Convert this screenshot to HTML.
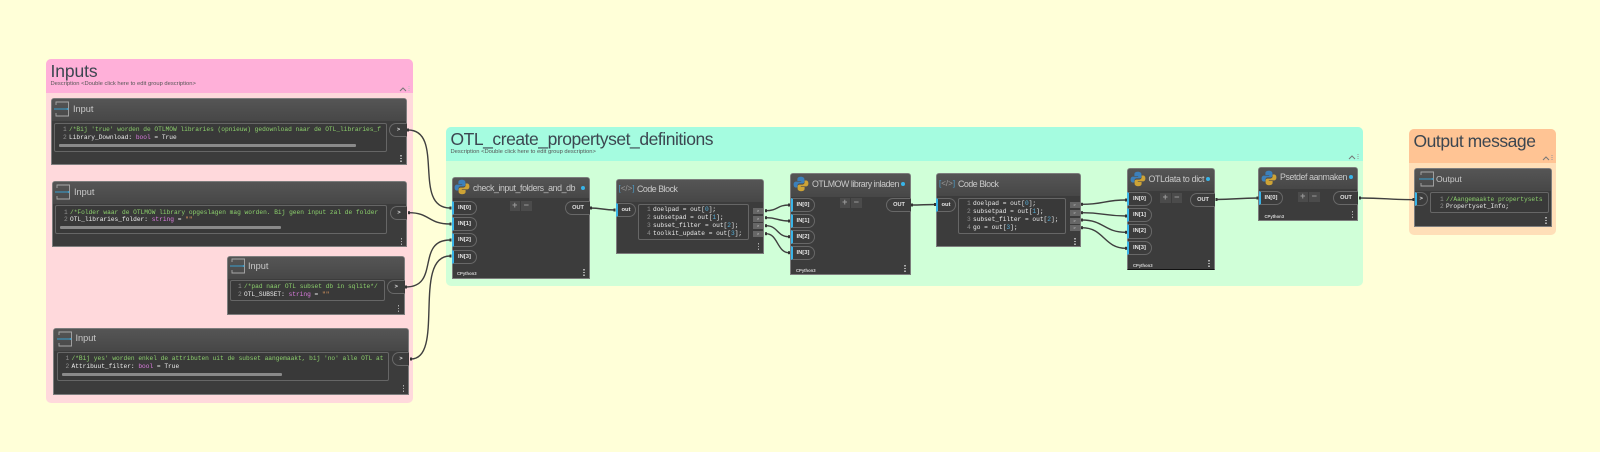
<!DOCTYPE html>
<html><head><meta charset="utf-8"><style>
html,body{margin:0;padding:0}
body{width:1600px;height:452px;background:#ffffd8;position:relative;overflow:hidden;font-family:"Liberation Sans",sans-serif}
#w{position:absolute;left:0;top:0;width:1600px;height:452px;filter:blur(.35px)}
#w div,#w svg{position:absolute}
.gh{border-radius:5px 5px 0 0}
.gt{color:#3c4650;font-size:17.5px;line-height:20px;white-space:nowrap;letter-spacing:-.46px}
.gd{color:#555;font-size:5.8px;line-height:7px;white-space:nowrap}
.n{background:#3c3c3c;border:1px solid #7d7d7d;box-sizing:border-box;border-radius:3px 3px 0 0}
.h{left:0;right:0;top:0;background:linear-gradient(#555,#474747);border-radius:2px 2px 0 0}
.t{color:#c9c9c9;font-size:8.8px;line-height:10px;white-space:nowrap;letter-spacing:-.4px}
.ti{letter-spacing:0;font-size:9.2px}
.c{border:1px solid #666;box-sizing:border-box;border-radius:2px;background:#393939}
.l{font-family:"Liberation Mono",monospace;font-size:6.2px;line-height:8px;color:#ececec;white-space:pre}
.g{font-family:"Liberation Mono",monospace;font-size:6.2px;line-height:8px;color:#8f8f8f}
.v{color:#8cd06c}.k{color:#dc7ce0}.s{color:#e09a60}.b{color:#55aed8}
.sb{height:3px;background:#8a8a8a;border-radius:1px}
.p{box-sizing:border-box;height:14.4px;width:24.5px;border:1px solid #686868;border-left:2px solid #38b4e8;border-radius:0 7px 7px 0;background:#3c3c3c;color:#e4e4e4;font-size:5.8px;font-weight:bold;line-height:12.4px;padding-left:4px;white-space:nowrap}
.o{box-sizing:border-box;height:14.4px;width:25px;border:1px solid #686868;border-right:0;border-radius:7px 0 0 7px;color:#e4e4e4;font-size:5.6px;font-weight:bold;line-height:12.4px;text-align:center;background:#3c3c3c}
.q{width:10px;height:6px;background:#666;color:#ddd;font-size:4px;line-height:6px;text-align:center}
.pm{width:10.5px;height:10px;background:#4b4b4b;color:#999;font-size:9px;line-height:9px;text-align:center;font-weight:bold}
.cp{color:#d6d6d6;font-size:4.2px;font-weight:bold;line-height:5px;white-space:nowrap}
.dt{width:4px;height:4px;border-radius:50%;background:#38b4e8}
.d3{width:1.5px;height:7px;background:repeating-linear-gradient(#aaa 0 1.4px,transparent 1.4px 2.8px)}
</style></head><body><div id="w">
<svg width="0" height="0"><defs>
<symbol id="py" viewBox="0 0 16 16"><path fill="#3c80bb" d="M8 .8C5 .8 4.4 2 4.4 3.2V5h3.8v.6H3C1.5 5.6.6 6.8.6 8.5s.8 3 2.2 3h1.6V9.6c0-1.2 1-2.2 2.2-2.2h3c1 0 1.8-.8 1.8-1.8V3.2C11.4 2 10.2.8 8 .8z"/><path fill="#cda336" d="M8 15.2c3 0 3.6-1.2 3.6-2.4V11H7.8v-.6H13c1.500 0 2.400-1.200 2.400-2.900s-.8-3-2.200-3h-1.600v1.900c0 1.200-1 2.200-2.200 2.200h-3c-1 0-1.800.8-1.800 1.800v2.400c0 1.200 1.200 2.400 3.400 2.400z"/></symbol>
<symbol id="io" viewBox="0 0 16 16"><path fill="none" stroke="#a8a8a8" stroke-width=".9" d="M2 4V1h12.500v14H2v-3"/><path fill="none" stroke="#38a8dc" stroke-width=".9" d="M0 8h13.500"/><circle cx="13.500" cy="8" r=".9" fill="#38a8dc"/></symbol>
</defs></svg>

<!-- groups -->
<div style="left:46px;top:59px;width:367px;height:344px;background:#ffd9dc;border-radius:5px"></div>
<div class="gh" style="left:46px;top:59px;width:367px;height:34px;background:#ffb0d9"></div>
<div class="gt" style="left:50.500px;top:61.300px;letter-spacing:-.1px">Inputs</div>
<div class="gd" style="left:50.500px;top:81px">Description &lt;Double click here to edit group description&gt;</div>
<svg style="left:399px;top:85.500px" width="12" height="6"><path d="M1 5l3-3 3 3" fill="none" stroke="#777" stroke-width="1"/><path d="M10 0v6" stroke="#bbb" stroke-dasharray="1 1"/></svg>

<div style="left:446px;top:127px;width:917px;height:159px;background:#d0ffd8;border-radius:5px"></div>
<div class="gh" style="left:446px;top:127px;width:917px;height:34px;background:#a5fce0"></div>
<div class="gt" style="left:450.500px;top:129px">OTL_create_propertyset_definitions</div>
<div class="gd" style="left:450.500px;top:149px">Description &lt;Double click here to edit group description&gt;</div>
<svg style="left:1348px;top:153.500px" width="12" height="6"><path d="M1 5l3-3 3 3" fill="none" stroke="#777" stroke-width="1"/><path d="M10 0v6" stroke="#999" stroke-dasharray="1 1"/></svg>

<div style="left:1409px;top:129px;width:147px;height:106px;background:#ffdfb8;border-radius:5px"></div>
<div class="gh" style="left:1409px;top:129px;width:147px;height:34px;background:#ffc494"></div>
<div class="gt" style="left:1413.500px;top:130.700px">Output message</div>
<svg style="left:1542px;top:155px" width="12" height="6"><path d="M1 5l3-3 3 3" fill="none" stroke="#777" stroke-width="1"/><path d="M10 0v6" stroke="#999" stroke-dasharray="1 1"/></svg>

<!-- input 1 -->
<div class="n" style="left:51px;top:98px;width:356px;height:67px"><div class="h" style="height:22px"></div></div>
<svg style="left:54px;top:101px" width="16" height="16"><use href="#io"/></svg>
<div class="t ti" style="left:73px;top:104px">Input</div>
<div class="c" style="left:54px;top:122.500px;width:333px;height:29.500px"></div>
<div class="g" style="left:63px;top:125.500px">1</div><div class="g" style="left:63px;top:133.500px">2</div>
<div class="l" style="left:69px;top:125.500px"><span class="v">/*Bij 'true' worden de OTLMOW libraries (opnieuw) gedownload naar de OTL_libraries_f</span></div>
<div class="l" style="left:69px;top:133.500px">Library_Download: <span class="k">bool</span> = True</div>
<div class="sb" style="left:59px;top:143.500px;width:297px"></div>
<div class="o" style="left:389px;top:123px;width:18px">&gt;</div>
<div class="d3" style="left:400px;top:155px"></div>

<!-- input 2 -->
<div class="n" style="left:52px;top:181px;width:355px;height:66px"><div class="h" style="height:22px"></div></div>
<svg style="left:55px;top:184px" width="16" height="16"><use href="#io"/></svg>
<div class="t ti" style="left:74px;top:186.500px">Input</div>
<div class="c" style="left:55px;top:205px;width:332px;height:29px"></div>
<div class="g" style="left:64px;top:208.500px">1</div><div class="g" style="left:64px;top:216px">2</div>
<div class="l" style="left:70px;top:208.500px"><span class="v">/*Folder waar de OTLMOW library opgeslagen mag worden. Bij geen input zal de folder</span></div>
<div class="l" style="left:70px;top:216px">OTL_libraries_folder: <span class="k">string</span> = <span class="s">""</span></div>
<div class="sb" style="left:60px;top:226px;width:221px"></div>
<div class="o" style="left:390px;top:205.500px;width:17px">&gt;</div>
<div class="d3" style="left:400.500px;top:237.500px"></div>

<!-- input 3 -->
<div class="n" style="left:226.500px;top:255.500px;width:178px;height:59px"><div class="h" style="height:22px"></div></div>
<svg style="left:230px;top:258px" width="16" height="16"><use href="#io"/></svg>
<div class="t ti" style="left:248px;top:261px">Input</div>
<div class="c" style="left:229.500px;top:280px;width:155.500px;height:21px"></div>
<div class="g" style="left:238px;top:283px">1</div><div class="g" style="left:238px;top:290.500px">2</div>
<div class="l" style="left:244px;top:283px"><span class="v">/*pad naar OTL subset db in sqlite*/</span></div>
<div class="l" style="left:244px;top:290.500px">OTL_SUBSET: <span class="k">string</span> = <span class="s">""</span></div>
<div class="o" style="left:387px;top:279.500px;width:17.500px">&gt;</div>
<div class="d3" style="left:397.500px;top:304.500px"></div>

<!-- input 4 -->
<div class="n" style="left:53px;top:327.500px;width:356px;height:67.500px"><div class="h" style="height:22px"></div></div>
<svg style="left:56.500px;top:330.500px" width="16" height="16"><use href="#io"/></svg>
<div class="t ti" style="left:75.500px;top:333px">Input</div>
<div class="c" style="left:56.500px;top:352px;width:332.500px;height:28.500px"></div>
<div class="g" style="left:65.500px;top:355px">1</div><div class="g" style="left:65.500px;top:362.500px">2</div>
<div class="l" style="left:71.500px;top:355px"><span class="v">/*Bij yes' worden enkel de attributen uit de subset aangemaakt, bij 'no' alle OTL at</span></div>
<div class="l" style="left:71.500px;top:362.500px">Attribuut_filter: <span class="k">bool</span> = True</div>
<div class="sb" style="left:61.500px;top:373px;width:220px"></div>
<div class="o" style="left:392px;top:352px;width:17px">&gt;</div>
<div class="d3" style="left:402.500px;top:384.500px"></div>

<!-- python A -->
<div class="n" style="left:451.500px;top:176.500px;width:138.500px;height:102px"><div class="h" style="height:20.500px"></div></div>
<svg style="left:454px;top:179px" width="16" height="16"><use href="#py"/></svg>
<div class="t" style="left:473px;top:182.500px">check_input_folders_and_db</div>
<div class="dt" style="left:580.500px;top:185.500px"></div>
<div class="p" style="left:452px;top:201px">IN[0]</div><div class="p" style="left:452px;top:217px">IN[1]</div><div class="p" style="left:452px;top:233px">IN[2]</div><div class="p" style="left:452px;top:249.500px">IN[3]</div>
<div class="pm" style="left:509.500px;top:201px">+</div><div class="pm" style="left:521px;top:201px">−</div>
<div class="o" style="left:565px;top:201px">OUT</div>
<div class="cp" style="left:457px;top:271px">CPython3</div>
<div class="d3" style="left:583px;top:268.500px"></div>

<!-- code 1 -->
<div class="n" style="left:615.500px;top:178.500px;width:148.500px;height:75px"><div class="h" style="height:22.500px"></div></div>
<div class="t" style="left:618.500px;top:184px;font-size:8px;letter-spacing:0;color:#4a9cc8">[<span style="color:#999">&lt;/&gt;</span>]</div>
<div class="t" style="left:637px;top:184px;letter-spacing:-.45px">Code Block</div>
<div class="p" style="left:616px;top:203px;width:19.500px;padding-left:3.500px">out</div>
<div class="c" style="left:638px;top:203.500px;width:111px;height:36px"></div>
<div class="g" style="left:647px;top:206.300px">1</div><div class="g" style="left:647px;top:214px">2</div><div class="g" style="left:647px;top:221.700px">3</div><div class="g" style="left:647px;top:229.500px">4</div>
<div class="l" style="left:653px;top:206.300px">doelpad = out[<span class="b">0</span>];</div>
<div class="l" style="left:653px;top:214px">subsetpad = out[<span class="b">1</span>];</div>
<div class="l" style="left:653px;top:221.700px">subset_filter = out[<span class="b">2</span>];</div>
<div class="l" style="left:653px;top:229.500px">toolkit_update = out[<span class="b">3</span>];</div>
<div class="q" style="left:753px;top:207.700px">&gt;</div><div class="q" style="left:753px;top:215.500px">&gt;</div><div class="q" style="left:753px;top:223.200px">&gt;</div><div class="q" style="left:753px;top:230.900px">&gt;</div>
<div class="d3" style="left:757.500px;top:243px"></div>

<!-- python B -->
<div class="n" style="left:790px;top:173px;width:120.500px;height:102px"><div class="h" style="height:23px"></div></div>
<svg style="left:793px;top:176px" width="16" height="16"><use href="#py"/></svg>
<div class="t" style="left:812px;top:179px;letter-spacing:-.45px">OTLMOW library inladen</div>
<div class="dt" style="left:901px;top:182px"></div>
<div class="p" style="left:790.500px;top:197.500px">IN[0]</div><div class="p" style="left:790.500px;top:213.700px">IN[1]</div><div class="p" style="left:790.500px;top:229.700px">IN[2]</div><div class="p" style="left:790.500px;top:246px">IN[3]</div>
<div class="pm" style="left:839.500px;top:198px">+</div><div class="pm" style="left:851px;top:198px">−</div>
<div class="o" style="left:886px;top:197.500px">OUT</div>
<div class="cp" style="left:796px;top:267.500px">CPython3</div>
<div class="d3" style="left:904px;top:265px"></div>

<!-- code 2 -->
<div class="n" style="left:936px;top:172.500px;width:144.500px;height:74.500px"><div class="h" style="height:22.500px"></div></div>
<div class="t" style="left:939px;top:179px;font-size:8px;letter-spacing:0;color:#4a9cc8">[<span style="color:#999">&lt;/&gt;</span>]</div>
<div class="t" style="left:958px;top:179px;letter-spacing:-.45px">Code Block</div>
<div class="p" style="left:936px;top:197.500px;width:19.500px;padding-left:3.500px">out</div>
<div class="c" style="left:958px;top:197.500px;width:108px;height:36.500px"></div>
<div class="g" style="left:967px;top:200.300px">1</div><div class="g" style="left:967px;top:208.300px">2</div><div class="g" style="left:967px;top:216px">3</div><div class="g" style="left:967px;top:223.500px">4</div>
<div class="l" style="left:973px;top:200.300px">doelpad = out[<span class="b">0</span>];</div>
<div class="l" style="left:973px;top:208.300px">subsetpad = out[<span class="b">1</span>];</div>
<div class="l" style="left:973px;top:216px">subset_filter = out[<span class="b">2</span>];</div>
<div class="l" style="left:973px;top:223.500px">go = out[<span class="b">3</span>];</div>
<div class="q" style="left:1069.500px;top:201.500px">&gt;</div><div class="q" style="left:1069.500px;top:209.500px">&gt;</div><div class="q" style="left:1069.500px;top:217.500px">&gt;</div><div class="q" style="left:1069.500px;top:225.200px">&gt;</div>
<div class="d3" style="left:1074px;top:237.500px"></div>

<!-- python C -->
<div class="n" style="left:1126.500px;top:168px;width:88.500px;height:101.500px;border-bottom-color:#111"><div class="h" style="height:21.500px"></div></div>
<svg style="left:1130px;top:171px" width="16" height="16"><use href="#py"/></svg>
<div class="t" style="left:1148.500px;top:173.700px;letter-spacing:-.3px">OTLdata to dict</div>
<div class="dt" style="left:1205.500px;top:176.500px"></div>
<div class="p" style="left:1127px;top:192px">IN[0]</div><div class="p" style="left:1127px;top:208px">IN[1]</div><div class="p" style="left:1127px;top:224.300px">IN[2]</div><div class="p" style="left:1127px;top:240.700px">IN[3]</div>
<div class="pm" style="left:1160px;top:193px">+</div><div class="pm" style="left:1171.500px;top:193px">−</div>
<div class="o" style="left:1190px;top:192.500px">OUT</div>
<div class="cp" style="left:1133px;top:262.500px">CPython3</div>
<div class="d3" style="left:1208px;top:260px"></div>

<!-- python D -->
<div class="n" style="left:1258px;top:166.500px;width:100px;height:54.500px"><div class="h" style="height:21.500px"></div></div>
<svg style="left:1261px;top:169.500px" width="16" height="16"><use href="#py"/></svg>
<div class="t" style="left:1280px;top:172px;letter-spacing:-.4px">Psetdef aanmaken</div>
<div class="dt" style="left:1349px;top:175px"></div>
<div class="p" style="left:1258.500px;top:190.500px">IN[0]</div>
<div class="pm" style="left:1297.500px;top:191.500px">+</div><div class="pm" style="left:1309px;top:191.500px">−</div>
<div class="o" style="left:1333px;top:190.500px">OUT</div>
<div class="cp" style="left:1264.500px;top:213.500px">CPython3</div>
<div class="d3" style="left:1351.500px;top:211px"></div>

<!-- output -->
<div class="n" style="left:1414px;top:168px;width:138px;height:59px"><div class="h" style="height:21.500px"></div></div>
<svg style="left:1419px;top:171px" width="16" height="16"><use href="#io"/></svg>
<div class="t" style="left:1436px;top:173.700px;letter-spacing:0;font-size:8.600px">Output</div>
<div class="p" style="left:1414.500px;top:192px;width:13.500px;padding-left:3px">&gt;</div>
<div class="c" style="left:1430px;top:192px;width:119px;height:21px"></div>
<div class="g" style="left:1440px;top:196px">1</div><div class="g" style="left:1440px;top:203.300px">2</div>
<div class="l" style="left:1446px;top:196px"><span class="v">//Aangemaakte propertysets</span></div>
<div class="l" style="left:1446px;top:203.300px">Propertyset_Info;</div>
<div class="d3" style="left:1545px;top:217px"></div>

<!-- wires -->
<svg style="left:0;top:0" width="1600" height="452"><g fill="none" stroke="#3f3f3f" stroke-width="1.400">
<path d="M408 130C445 130 412 208 450 208"/>
<path d="M409 212.700C430 212.700 428 224 450 224"/>
<path d="M406 287C440 287 416 240 450 240"/>
<path d="M411 359C445 359 412 256 450 256"/>
<path d="M590 208C602 208 603 210 615 210"/>
<path d="M766 210.700C778 210.700 777 205 789 205"/>
<path d="M766 217.700C778 217.700 777 221 789 221"/>
<path d="M766 225.700C778 225.700 777 236.700 789 236.700"/>
<path d="M766 233.700C778 233.700 777 252.700 789 252.700"/>
<path d="M911 205C923 205 924 204.500 936 204.500"/>
<path d="M1082 204.300C1104 204.300 1104 200 1126 200"/>
<path d="M1082 212.700C1104 212.700 1104 216 1126 216"/>
<path d="M1082 220C1104 220 1104 232.300 1126 232.300"/>
<path d="M1082 227.700C1104 227.700 1104 248.300 1126 248.300"/>
<path d="M1215.500 199.500C1236 199.500 1237 198 1258 198"/>
<path d="M1360 198C1386 198 1388 199.700 1414 199.700"/>
</g><g fill="#333">
<rect x="407" y="128.500" width="2" height="3"/><rect x="408" y="211.200" width="2" height="3"/><rect x="405" y="285.500" width="2" height="3"/><rect x="410" y="357.500" width="2" height="3"/>
<rect x="449.500" y="206.500" width="2" height="3"/><rect x="449.500" y="222.500" width="2" height="3"/><rect x="449.500" y="238.500" width="2" height="3"/><rect x="449.500" y="254.500" width="2" height="3"/>
<rect x="590" y="206.500" width="2" height="3"/><rect x="613.500" y="208.500" width="2" height="3"/>
<rect x="765" y="209.200" width="2" height="3"/><rect x="765" y="216.200" width="2" height="3"/><rect x="765" y="224.200" width="2" height="3"/><rect x="765" y="232.200" width="2" height="3"/>
<rect x="788" y="203.500" width="2" height="3"/><rect x="788" y="219.500" width="2" height="3"/><rect x="788" y="235.200" width="2" height="3"/><rect x="788" y="251.200" width="2" height="3"/>
<rect x="911" y="203.500" width="2" height="3"/><rect x="934" y="203" width="2" height="3"/>
<rect x="1081" y="202.800" width="2" height="3"/><rect x="1081" y="211.200" width="2" height="3"/><rect x="1081" y="218.500" width="2" height="3"/><rect x="1081" y="226.200" width="2" height="3"/>
<rect x="1125" y="198.500" width="2" height="3"/><rect x="1125" y="214.500" width="2" height="3"/><rect x="1125" y="230.800" width="2" height="3"/><rect x="1125" y="246.800" width="2" height="3"/>
<rect x="1215.500" y="198" width="2" height="3"/><rect x="1256.500" y="196.500" width="2" height="3"/><rect x="1359" y="196.500" width="2" height="3"/><rect x="1412.500" y="198" width="2" height="3"/>
</g></svg>
</div></body></html>
